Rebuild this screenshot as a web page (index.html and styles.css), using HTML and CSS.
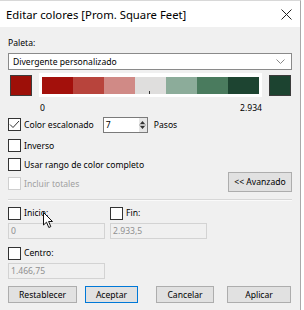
FILE: index.html
```html
<!DOCTYPE html>
<html lang="es">
<head>
    <meta charset="UTF-8">
    <title>Editar colores</title>
    <link rel="stylesheet" href="styles.css">
</head>
<body>
    <div class="window">
        <div class="titlebar">
            <span class="title">Editar colores [Prom. Square Feet]</span>
            <svg class="close" width="11" height="11" viewBox="0 0 11 11">
                <path d="M0.5 0.5 L10.5 10.5 M10.5 0.5 L0.5 10.5" stroke="#222" stroke-width="1"/>
            </svg>
        </div>

        <div class="content">
            <div class="label">Paleta:</div>
            <div class="select">
                <span>Divergente personalizado</span>
                <svg width="9" height="6" viewBox="0 0 9 6">
                    <path d="M0.5 0.5 L4.5 4.5 L8.5 0.5" fill="none" stroke="#888" stroke-width="1"/>
                </svg>
            </div>

            <div class="ramp">
                <div class="swatch red"></div>
                <div class="bar">
                    <div class="steps">
                        <div style="background:#a3100b"></div>
                        <div style="background:#b8443c"></div>
                        <div style="background:#d08a86"></div>
                        <div style="background:#dfdedd"></div>
                        <div style="background:#8cac9a"></div>
                        <div style="background:#4a7b5e"></div>
                        <div style="background:#1d4431"></div>
                    </div>
                    <span class="tick"></span>
                </div>
                <div class="swatch green"></div>
            </div>
            <div class="range">
                <span>0</span>
                <span>2.934</span>
            </div>

            <div class="row">
                <span class="check checked">
                    <svg width="11" height="9" viewBox="0 0 11 9"><path d="M1 4.5 L4 7.5 L10 1" fill="none" stroke="#333" stroke-width="1"/></svg>
                </span>
                <span>Color escalonado</span>
                <div class="spin">
                    <span class="spin-value">7</span>
                    <span class="spin-btns">
                        <svg width="7" height="12" viewBox="0 0 7 12">
                            <path d="M3.5 2 L6 5 L1 5 Z M1 7 L6 7 L3.5 10 Z" fill="#333"/>
                            <path d="M0 6 L7 6" stroke="#999" stroke-width="1"/>
                        </svg>
                    </span>
                </div>
                <span>Pasos</span>
            </div>

            <div class="options">
                <div class="option-list">
                    <div class="row"><span class="check"></span><span>Inverso</span></div>
                    <div class="row"><span class="check"></span><span>Usar rango de color completo</span></div>
                    <div class="row disabled"><span class="check"></span><span>Incluir totales</span></div>
                </div>
                <button class="btn advanced">&lt;&lt; Avanzado</button>
            </div>

            <div class="separator"></div>

            <div class="limits">
                <div class="field">
                    <div class="row"><span class="check"></span><span>Inicio:</span></div>
                    <div class="input">0</div>
                </div>
                <div class="field">
                    <div class="row"><span class="check"></span><span>Fin:</span></div>
                    <div class="input">2.933,5</div>
                </div>
            </div>
            <div class="field">
                <div class="row"><span class="check"></span><span>Centro:</span></div>
                <div class="input">1.466,75</div>
            </div>

            <div class="buttons">
                <button class="btn reset">Restablecer</button>
                <button class="btn ok">Aceptar</button>
                <button class="btn cancel">Cancelar</button>
                <button class="btn apply">Aplicar</button>
            </div>
        </div>

        <svg class="pointer" width="12" height="17" viewBox="0 0 12 17">
            <path d="M0.5 0.5 L0.5 13 L3.5 10.2 L5.8 15.5 L7.8 14.6 L5.6 9.5 L9.5 9.5 Z" fill="#fff" stroke="#111" stroke-width="1" stroke-linejoin="round"/>
        </svg>
    </div>
</body>
</html>
```

FILE: styles.css
```css
body {
    margin: 0;
    background: #ffffff;
    font-family: "Noto Sans", "Open Sans", sans-serif;
    font-size: 8.6px;
    color: #000;
}
.window {
    position: relative;
    width: 301px;
    height: 310px;
    background: #f0f0f0;
    border-right: 1px solid #a9a9a9;
    border-top: 1px solid #d8d8d8;
    box-sizing: border-box;
    overflow: hidden;
}
.titlebar {
    height: 26px;
    background: #ffffff;
    display: flex;
    align-items: center;
    justify-content: space-between;
    padding: 0 8px 0 6px;
}
.title {
    font-size: 11.3px;
}
.content {
    padding: 9px 8px 0 8px;
}
.label {
    line-height: 14px;
}
.select {
    margin-top: 3px;
    height: 17px;
    background: #fff;
    border: 1px solid #8a8a8a;
    box-sizing: border-box;
    display: flex;
    align-items: center;
    justify-content: space-between;
    padding: 0 6px 0 4px;
}
.ramp {
    margin-top: 3px;
    display: flex;
    align-items: center;
    gap: 7px;
    padding-left: 2px;
}
.swatch {
    width: 22px;
    height: 21px;
    box-sizing: border-box;
    border: 1px solid #3c3c3c;
}
.swatch.red {
    background: #9d0f08;
}
.swatch.green {
    background: #1c4330;
}
.bar {
    position: relative;
    width: 223px;
    height: 24px;
    background: #fff;
    padding: 4px 3px 3px 3px;
    box-sizing: border-box;
}
.steps {
    display: flex;
    height: 17px;
}
.steps div {
    flex: 1;
}
.tick {
    position: absolute;
    left: 110px;
    top: 18px;
    width: 1px;
    height: 3px;
    background: #333;
}
.range {
    display: flex;
    justify-content: space-between;
    padding: 4px 30px 0 32px;
    line-height: 14px;
}
.row {
    display: flex;
    align-items: center;
    gap: 3px;
    height: 19px;
}
.check {
    width: 13px;
    height: 13px;
    box-sizing: border-box;
    border: 1px solid #333;
    background: #fff;
    display: inline-flex;
    align-items: center;
    justify-content: center;
}
.disabled {
    color: #a0a0a0;
}
.disabled .check {
    border-color: #cfcfcf;
}
.spin {
    display: flex;
    width: 45px;
    height: 16px;
    margin: 0 3px 0 6px;
    background: #fff;
    border: 1px solid #7a7a7a;
    box-sizing: border-box;
}
.spin-value {
    flex: 1;
    padding-left: 2px;
    line-height: 14px;
}
.spin-btns {
    width: 8px;
    background: #e6e6e6;
    display: flex;
    align-items: center;
    justify-content: center;
}
.options {
    display: flex;
    justify-content: space-between;
    align-items: flex-end;
    margin-top: 2px;
}
.btn {
    font-family: inherit;
    font-size: 8.6px;
    background: #e1e1e1;
    border: 1px solid #adadad;
    color: #000;
    padding: 0;
    height: 20px;
}
.advanced {
    width: 64px;
    margin-bottom: 1px;
}
.separator {
    margin-top: 6px;
    height: 1px;
    background: #d7d7d7;
    border-bottom: 1px solid #fafafa;
}
.limits {
    display: flex;
    gap: 5px;
    margin-top: 2px;
}
.field .row {
    height: 20px;
}
.input {
    width: 97px;
    height: 16px;
    box-sizing: border-box;
    border: 1px solid #d3d3d3;
    background: #f0f0f0;
    color: #8f8f8f;
    padding-left: 2px;
    line-height: 14px;
}
.limits + .field {
    margin-top: 4px;
}
.buttons {
    display: flex;
    margin-top: 7px;
}
.buttons .btn {
    height: 17px;
}
.reset {
    width: 69px;
}
.ok {
    width: 53px;
    margin-left: 8px;
    border-color: #0078d7;
}
.cancel {
    width: 58px;
    margin-left: 18px;
}
.apply {
    width: 64px;
    margin-left: 13px;
}
.pointer {
    position: absolute;
    left: 43px;
    top: 211px;
}
```
